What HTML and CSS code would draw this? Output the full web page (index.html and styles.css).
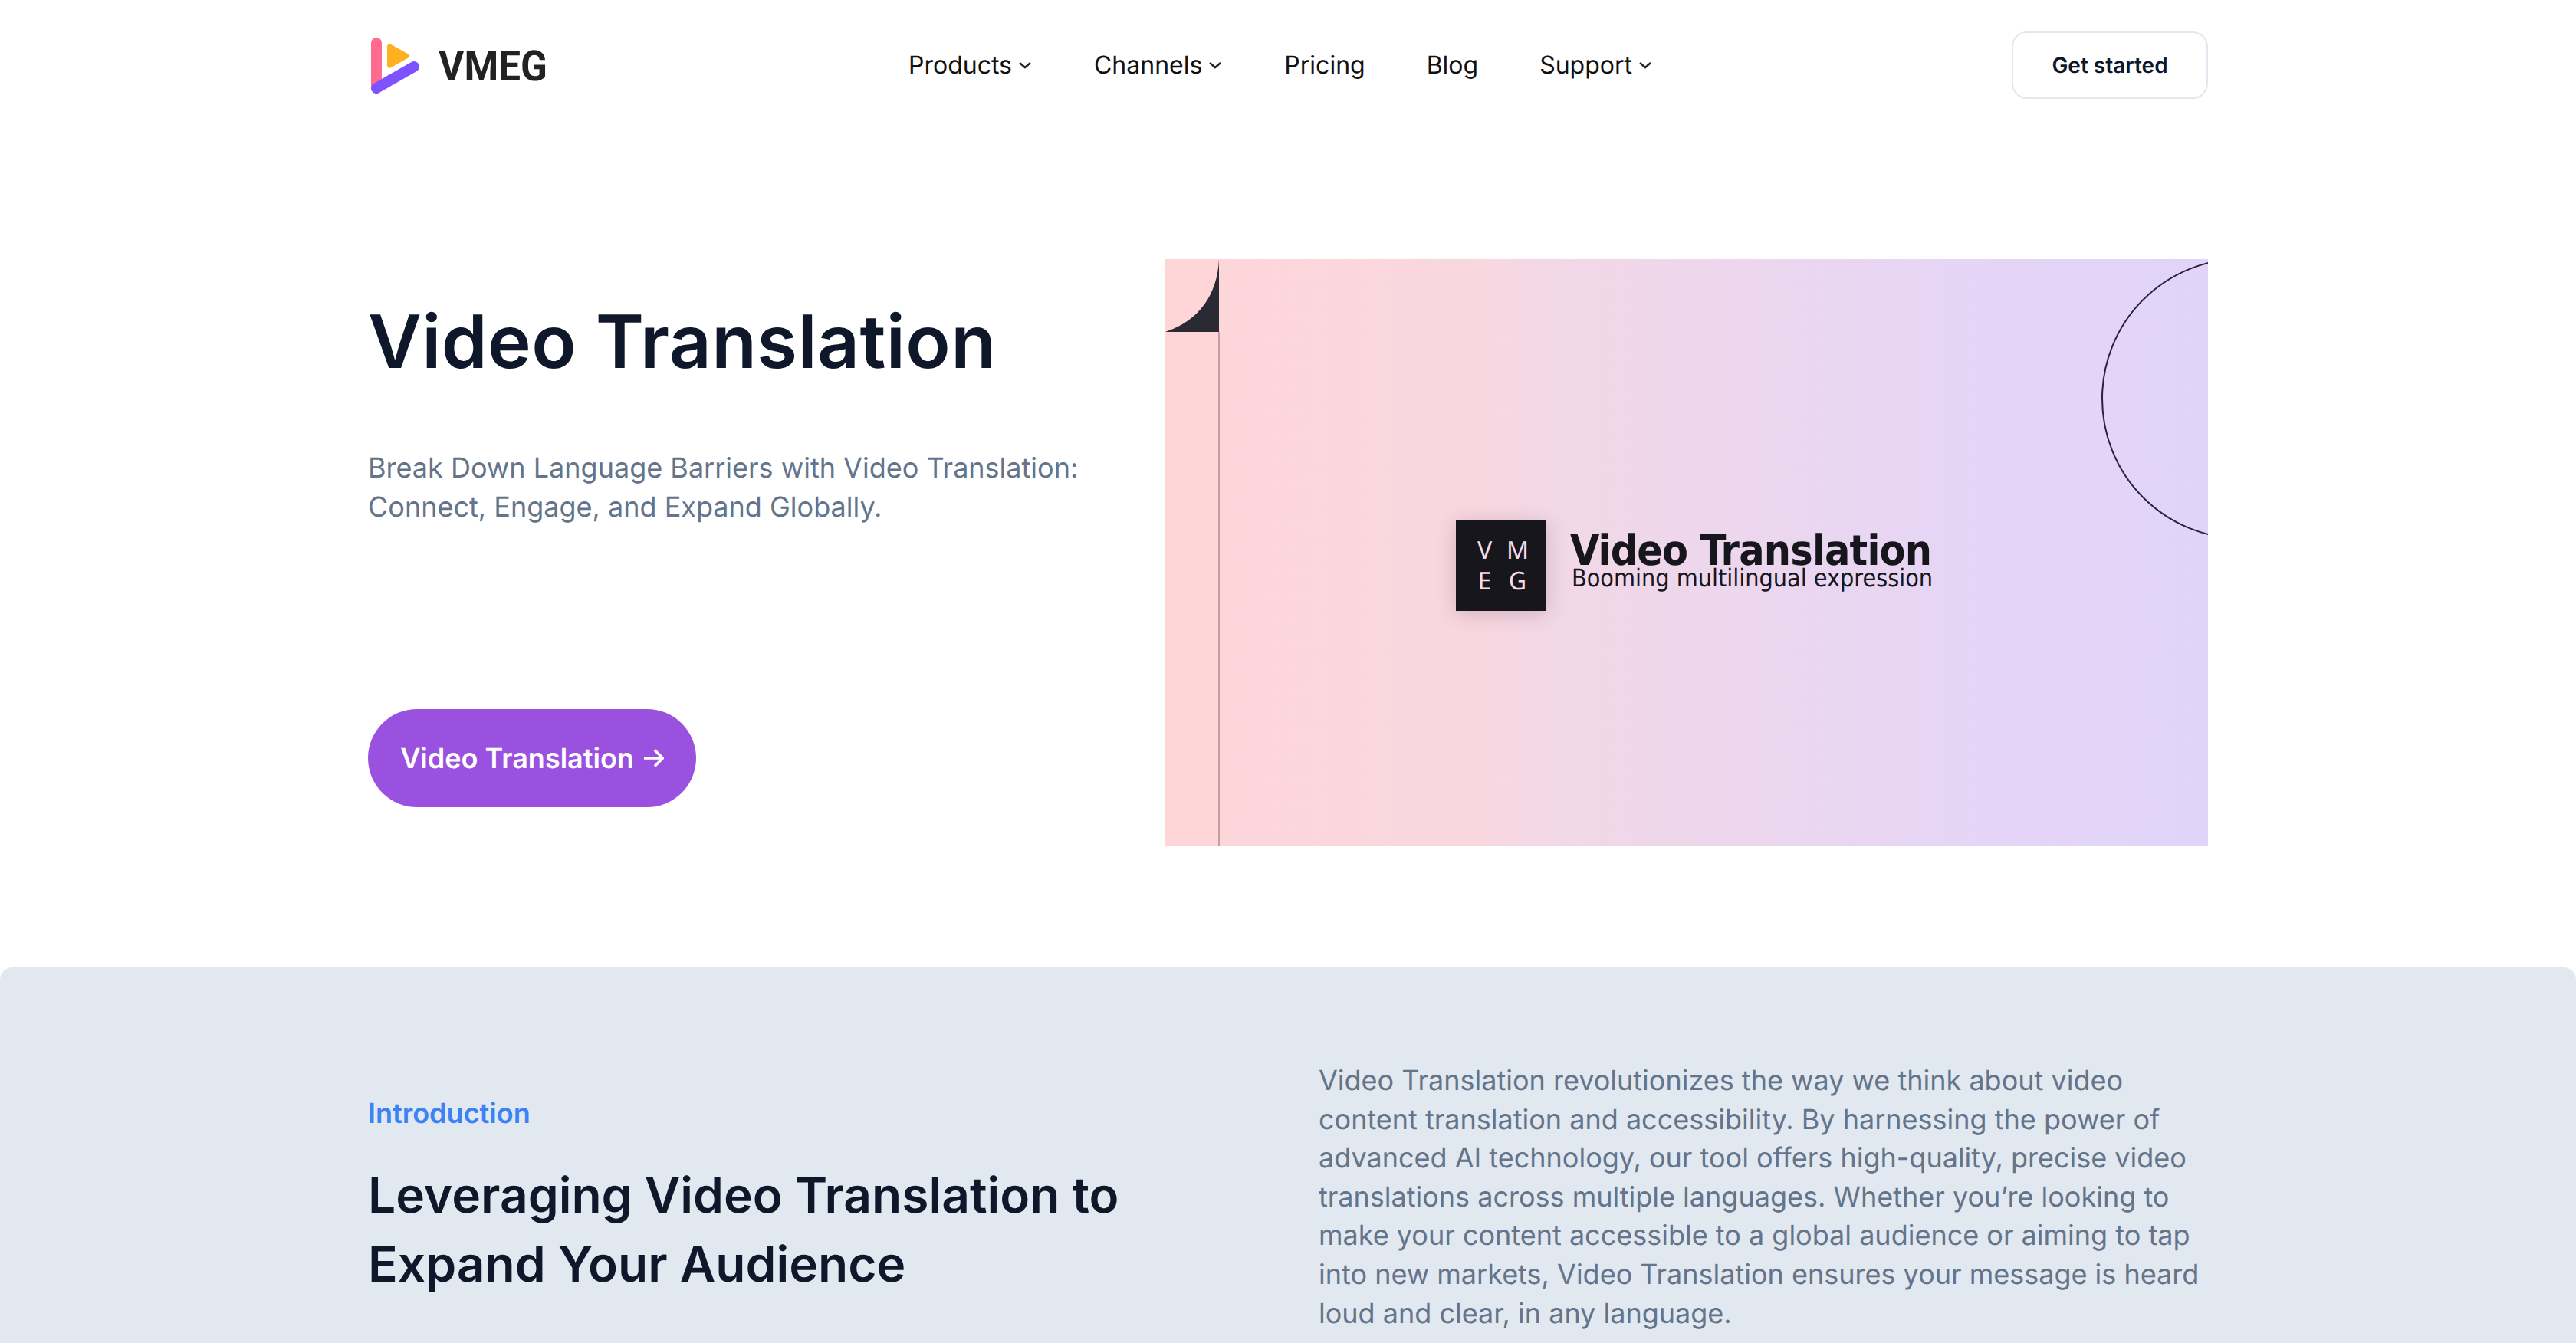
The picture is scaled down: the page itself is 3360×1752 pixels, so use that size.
FILE: index.html
```html
<!DOCTYPE html>
<html lang="en">
<head>
<meta charset="utf-8">
<title>Video Translation</title>
<link rel="stylesheet" href="styles.css">
</head>
<body>
<header class="nav wrap">
  <a class="logo" href="#">
    <svg class="logo-mark" width="66" height="76" viewBox="0 0 66 76">
      <path d="M7 9V68" stroke="#ff6b8e" stroke-width="14" stroke-linecap="round"/>
      <path d="M7 68L56 40" stroke="#7f52ff" stroke-width="14" stroke-linecap="round"/>
      <path d="M24.500 14L46 26L24.500 38Z" fill="#ffb020" stroke="#ffb020" stroke-width="7" stroke-linejoin="round"/>
    </svg>
    <span class="logo-text">VMEG</span>
  </a>
  <nav class="menu">
    <a class="menu-item" href="#">Products<svg class="chev" width="20" height="12" viewBox="0 0 20 12"><path d="M3 3l7 6 7-6"/></svg></a>
    <a class="menu-item" href="#">Channels<svg class="chev" width="20" height="12" viewBox="0 0 20 12"><path d="M3 3l7 6 7-6"/></svg></a>
    <a class="menu-item" href="#">Pricing</a>
    <a class="menu-item" href="#">Blog</a>
    <a class="menu-item" href="#">Support<svg class="chev" width="20" height="12" viewBox="0 0 20 12"><path d="M3 3l7 6 7-6"/></svg></a>
  </nav>
  <a class="cta-small" href="#">Get started</a>
</header>

<section class="hero wrap">
  <div class="hero-copy">
    <h1 class="hero-title">Video Translation</h1>
    <p class="hero-sub">Break Down Language Barriers with Video Translation: Connect, Engage, and Expand Globally.</p>
    <a class="hero-btn" href="#">Video Translation
      <svg width="27" height="24" viewBox="0 0 27 24"><path d="M1 12H25.500M15 1.500L25.500 12L15 22.500"/></svg>
    </a>
  </div>
  <div class="hero-art">
    <svg class="art-shapes" width="1360" height="766" viewBox="0 0 1360 766">
      <rect x="0" y="0" width="70" height="766" fill="#ffd6d8"/>
      <path d="M70 0C68 50 40 82 0 95H70Z" fill="#2a2a34"/>
      <path d="M70 95V766" stroke="#8a6a72" stroke-opacity=".5" stroke-width="2"/>
      <circle cx="1404.500" cy="182" r="182.500" fill="none" stroke="#2b2140" stroke-width="2"/>
    </svg>
    <div class="lockup">
      <div class="badge"><span>V</span><span>M</span><span>E</span><span>G</span></div>
      <div class="lockup-text">
        <div class="lockup-title">Video Translation</div>
        <div class="lockup-sub">Booming multilingual expression</div>
      </div>
    </div>
  </div>
</section>

<section class="intro">
  <div class="intro-grid wrap">
    <div class="intro-left">
      <div class="eyebrow">Introduction</div>
      <h2 class="intro-title">Leveraging Video Translation to Expand Your Audience</h2>
    </div>
    <p class="intro-text">Video Translation revolutionizes the way we think about video content translation and accessibility. By harnessing the power of advanced AI technology, our tool offers high-quality, precise video translations across multiple languages. Whether you’re looking to make your content accessible to a global audience or aiming to tap into new markets, Video Translation ensures your message is heard loud and clear, in any language.</p>
  </div>
</section>
</body>
</html>
```

FILE: styles.css
```css
* { box-sizing: border-box; }
html, body { margin: 0; padding: 0; height: 1752px; overflow: hidden; background: #fff; }
body { font-family: Inter, "Liberation Sans", sans-serif; color: #0f172a; text-rendering: geometricPrecision; }
a { text-decoration: none; color: inherit; }
.wrap { width: 2400px; margin: 0 auto; }

.nav { height: 170px; display: flex; align-items: center; justify-content: space-between; }
.logo { display: flex; align-items: center; gap: 22px; width: 237px; }
.logo-mark { flex: none; margin-left: 4px; }
.logo-text { font-family: Roboto, sans-serif; font-weight: 700; font-size: 55px; line-height: 60px; color: #222; padding-top: 3px; transform: scaleX(.93); transform-origin: left center; }
.menu { display: flex; gap: 80px; }
.menu-item { display: flex; align-items: center; gap: 7px; font-size: 32px; line-height: 48px; color: #111; }
.chev { fill: none; stroke: #222; stroke-width: 2.500; }
.cta-small { width: 256px; height: 88px; display: flex; align-items: center; justify-content: center; border: 2px solid #e2e8f0; border-radius: 20px; font-size: 28px; font-weight: 600; color: #0f172a; }

.hero { display: flex; justify-content: space-between; padding-top: 168px; }
.hero-copy { width: 1000px; }
.hero-title { margin: 48px 0 0; font-size: 96px; line-height: 120px; font-weight: 600; letter-spacing: .4px; }
.hero-sub { margin: 79px 0 0; width: 960px; font-size: 36px; line-height: 50.600px; color: #64748b; }
.hero-btn { margin-top: 239px; width: 428px; height: 128px; border-radius: 64px; background: #9b51e0; color: #fff; display: flex; align-items: center; justify-content: center; gap: 12px; font-size: 36px; font-weight: 600; }
.hero-btn svg { fill: none; stroke: #fff; stroke-width: 3.500; }
.hero-art { position: relative; width: 1360px; height: 766px; background: linear-gradient(90deg, #fdd6da 5%, #f9d7e0 30%, #f2d8e7 38%, #e4d5f7 80%, #e2d4f9 100%); display: flex; align-items: center; justify-content: center; overflow: hidden; }
.art-shapes { position: absolute; inset: 0; }
.lockup { position: relative; display: flex; align-items: center; gap: 31px; margin: 33px 0 0 20px; }
.badge { width: 118px; height: 118px; background: #17161d; box-shadow: 0 4px 24px rgba(60,30,50,.2); color: #f7dde5; display: grid; grid-template-columns: 43px 43px; grid-auto-rows: 40px; justify-content: center; align-content: center; text-align: center; font-family: "Noto Sans", sans-serif; font-weight: 400; font-size: 32px; line-height: 40px; }
.lockup-text { margin-top: -18px; }
.lockup-title { font-family: "DejaVu Sans", sans-serif; font-weight: 700; font-stretch: condensed; font-size: 55px; line-height: 50px; letter-spacing: -.8px; color: #17161d; }
.lockup-sub { font-family: "DejaVu Sans", sans-serif; font-stretch: condensed; font-size: 32px; line-height: 22px; color: #17161d; padding-left: 2px; }

.intro { margin-top: 158px; height: 490px; background: #e2e8f0; border-radius: 16px 16px 0 0; }
.intro-grid { display: flex; justify-content: space-between; }
.intro-left { padding-top: 165px; }
.eyebrow { font-size: 36px; line-height: 50px; font-weight: 600; color: #3b82f6; }
.intro-title { margin: 38px 0 0; width: 1040px; font-size: 64px; line-height: 90px; font-weight: 600; }
.intro-text { margin: 122px 0 0; width: 1160px; font-size: 36px; line-height: 50.600px; color: #64748b; }
```
